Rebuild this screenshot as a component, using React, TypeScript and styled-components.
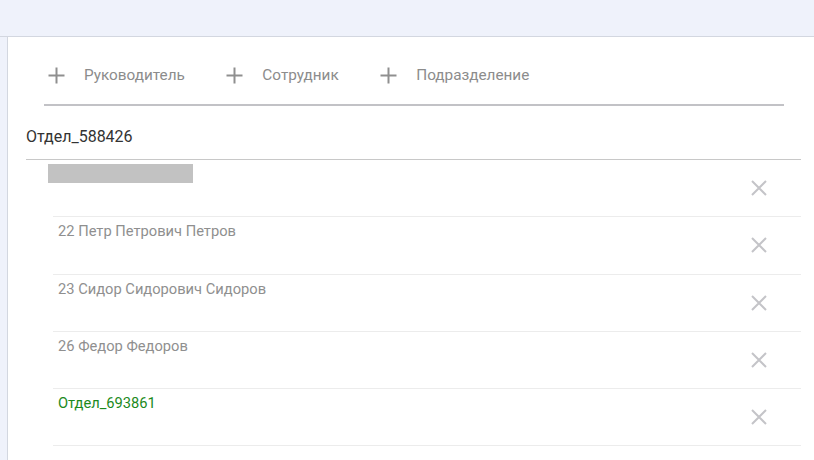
import React from "react";
import styled, { createGlobalStyle } from "styled-components";

const Global = createGlobalStyle`
  html, body { margin: 0; padding: 0; background: #ffffff; }
  body { font-family: Roboto, "Noto Sans", sans-serif; }
  * { box-sizing: border-box; }
`;

const Page = styled.div`
  width: 814px;
  height: 460px;
  display: flex;
  flex-direction: column;
  overflow: hidden;
`;

const TopBar = styled.div`
  height: 37px;
  flex: 0 0 37px;
  background: #eff2fb;
  border-bottom: 1px solid #d3d7e0;
`;

const Body = styled.div`
  flex: 1;
  display: flex;
  min-height: 0;
`;

const SideStrip = styled.div`
  width: 8px;
  flex: 0 0 8px;
  background: #eff2fb;
  border-right: 1px solid #d3d7e0;
`;

const Main = styled.div`
  flex: 1;
  display: flex;
  flex-direction: column;
  padding-right: 13px;
`;

const Toolbar = styled.div`
  margin: 0 17px 0 36px;
  height: 69px;
  display: flex;
  align-items: flex-start;
  border-bottom: 2px solid #c2c2c6;
  padding-left: 4px;
  padding-top: 29px;
`;

const AddButton = styled.button`
  display: flex;
  align-items: center;
  background: none;
  border: none;
  padding: 0;
  margin-right: 41.5px;
  font-family: Roboto, "Noto Sans", sans-serif;
  font-size: 15.3px;
  line-height: 18px;
  color: #8c8c8c;
  cursor: pointer;
  svg { margin-right: 19px; }
`;

const Title = styled.div`
  margin-left: 18px;
  height: 54px;
  padding-top: 21px;
  font-size: 16px;
  line-height: 20px;
  color: #333333;
  border-bottom: 1px solid #c8c8c8;
`;

const List = styled.div`
  margin-left: 45px;
  display: flex;
  flex-direction: column;
`;

const Row = styled.div`
  height: 57.3px;
  display: flex;
  justify-content: space-between;
  border-bottom: 1px solid #ececec;
  padding-left: 5px;
  padding-right: 33px;
`;

const RowText = styled.div<{ $green?: boolean }>`
  padding-top: 6px;
  font-size: 14.7px;
  line-height: 17px;
  color: ${(p) => (p.$green ? "#1c8a1c" : "#8f8f8f")};
`;

const Placeholder = styled.div`
  margin-top: 4px;
  margin-left: -10px;
  width: 145px;
  height: 19px;
  background: #c2c2c2;
`;

const RemoveButton = styled.button`
  align-self: center;
  background: none;
  border: none;
  padding: 0;
  width: 18px;
  height: 18px;
  display: flex;
  align-items: center;
  justify-content: center;
  cursor: pointer;
`;

const PlusIcon = () => (
  <svg width="17" height="17" viewBox="0 0 17 17">
    <path d="M8.5 0.5V16.5M0.5 8.5H16.5" stroke="#8f8f8f" strokeWidth="2" fill="none" />
  </svg>
);

const CloseIcon = () => (
  <svg width="16" height="16" viewBox="0 0 16 16">
    <path d="M1 1L15 15M15 1L1 15" stroke="#c4c4c8" strokeWidth="2" fill="none" />
  </svg>
);

const rows: { text: string; green?: boolean }[] = [
  { text: "22 Петр Петрович Петров" },
  { text: "23 Сидор Сидорович Сидоров" },
  { text: "26 Федор Федоров" },
  { text: "Отдел_693861", green: true },
];

export default function App() {
  return (
    <Page>
      <Global />
      <TopBar />
      <Body>
        <SideStrip />
        <Main>
          <Toolbar>
            <AddButton><PlusIcon />Руководитель</AddButton>
            <AddButton><PlusIcon />Сотрудник</AddButton>
            <AddButton><PlusIcon />Подразделение</AddButton>
          </Toolbar>
          <Title>Отдел_588426</Title>
          <List>
            <Row>
              <Placeholder />
              <RemoveButton aria-label="Удалить"><CloseIcon /></RemoveButton>
            </Row>
            {rows.map((r) => (
              <Row key={r.text}>
                <RowText $green={r.green}>{r.text}</RowText>
                <RemoveButton aria-label="Удалить"><CloseIcon /></RemoveButton>
              </Row>
            ))}
          </List>
        </Main>
      </Body>
    </Page>
  );
}
